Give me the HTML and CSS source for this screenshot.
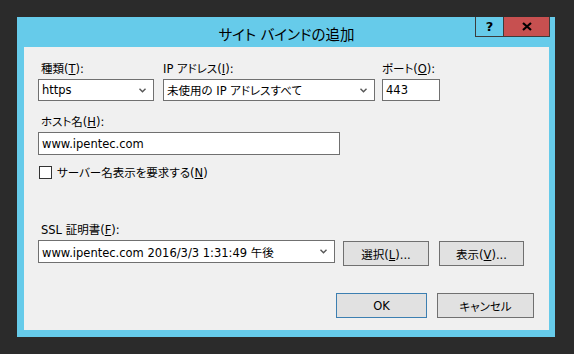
FILE: index.html
```html
<!DOCTYPE html>
<html lang="ja">
<head>
  <meta charset="UTF-8" />
  <title>サイト バインドの追加</title>
  <link rel="stylesheet" href="styles.css">
</head>
<body>
  <div class="window">
    <div class="titlebar">
      <span class="title">サイト バインドの追加</span>
      <div class="caption-buttons">
        <span class="cap-btn help">?</span>
        <span class="cap-btn close">
          <svg width="10" height="9" viewBox="0 0 10 9"><path d="M1 1 L9 8 M9 1 L1 8" stroke="#000" stroke-width="2.2" fill="none"/></svg>
        </span>
      </div>
    </div>
    <div class="client">
      <div class="row-top">
        <div class="field f-type">
          <span class="label indent">種類(<u>T</u>):</span>
          <div class="select">https
            <svg class="arrow" width="7" height="5" viewBox="0 0 7 5"><path d="M0.5 0.8 L3.5 3.8 L6.5 0.8" stroke="#555" stroke-width="1.4" fill="none"/></svg>
          </div>
        </div>
        <div class="field f-ip">
          <span class="label">IP アドレス(<u>I</u>):</span>
          <div class="select">未使用の IP アドレスすべて
            <svg class="arrow" width="7" height="5" viewBox="0 0 7 5"><path d="M0.5 0.8 L3.5 3.8 L6.5 0.8" stroke="#555" stroke-width="1.4" fill="none"/></svg>
          </div>
        </div>
        <div class="field f-port">
          <span class="label">ポート(<u>O</u>):</span>
          <div class="textbox">443</div>
        </div>
      </div>

      <div class="field f-host">
        <span class="label indent">ホスト名(<u>H</u>):</span>
        <div class="textbox tall">www.ipentec.com</div>
      </div>

      <div class="check">
        <span class="box"></span>
        <span>サーバー名表示を要求する(<u>N</u>)</span>
      </div>

      <div class="field f-ssl">
        <span class="label indent">SSL 証明書(<u>F</u>):</span>
        <div class="ssl-row">
          <div class="select tall ssl-select">www.ipentec.com 2016/3/3 1:31:49 午後
            <svg class="arrow" width="7" height="5" viewBox="0 0 7 5"><path d="M0.5 0.8 L3.5 3.8 L6.5 0.8" stroke="#555" stroke-width="1.4" fill="none"/></svg>
          </div>
          <button class="btn btn-select">選択(<u>L</u>)...</button>
          <button class="btn btn-view">表示(<u>V</u>)...</button>
        </div>
      </div>

      <div class="actions">
        <button class="btn btn-ok">OK</button>
        <button class="btn btn-cancel">キャンセル</button>
      </div>
    </div>
  </div>
</body>
</html>
```

FILE: styles.css
```css
* {
  margin: 0;
  padding: 0;
  box-sizing: border-box;
}
body {
  background-color: #2b2b2b;
  padding: 17px;
  font-family: "DejaVu Sans", "Noto Sans CJK JP", sans-serif;
  font-size: 11.5px;
  font-feature-settings: "palt";
  color: #000;
}
.window {
  width: 538px;
  height: 320px;
  background-color: #66cbea;
  padding: 0 6px 7px 7px;
  display: flex;
  flex-direction: column;
}
.titlebar {
  height: 30px;
  position: relative;
  display: flex;
  align-items: center;
  justify-content: center;
}
.title {
  font-size: 14.5px;
  padding-top: 2px;
  color: #000;
}
.caption-buttons {
  position: absolute;
  top: 0;
  right: -1px;
  display: flex;
}
.cap-btn {
  height: 20px;
  display: flex;
  align-items: center;
  justify-content: center;
  border: 1px solid #3c3c3c;
  border-top: none;
}
.help {
  width: 28px;
  font-weight: bold;
  font-size: 13px;
  border-right: none;
}
.close {
  width: 47px;
  background-color: #c75050;
}
.client {
  flex: 1;
  background-color: #f0f0f0;
  padding: 14px 0 0 14px;
  display: flex;
  flex-direction: column;
}
.label {
  display: block;
  height: 16px;
  line-height: 16px;
  margin-bottom: 2px;
  white-space: nowrap;
}
.indent {
  padding-left: 3px;
}
.row-top {
  display: flex;
}
.f-type {
  width: 116px;
  margin-right: 9px;
}
.f-ip {
  width: 212px;
  margin-right: 7px;
}
.f-port {
  width: 58px;
}
.select,
.textbox {
  height: 22px;
  background: #fff;
  border: 1px solid #707070;
  display: flex;
  align-items: center;
  padding: 0 3px;
  white-space: nowrap;
}
.select {
  justify-content: space-between;
}
.select .arrow {
  margin-right: 4px;
  flex-shrink: 0;
}
.tall {
  height: 23px;
}
.f-host {
  margin-top: 13px;
  width: 302px;
}
.check {
  display: flex;
  align-items: center;
  margin-top: 9px;
  margin-left: 1px;
  height: 16px;
  white-space: nowrap;
}
.check .box {
  width: 13px;
  height: 13px;
  border: 1px solid #333;
  background: #fff;
  margin-right: 5px;
}
.f-ssl {
  margin-top: 42px;
}
.ssl-row {
  display: flex;
  align-items: flex-start;
}
.ssl-select {
  width: 297px;
}
.btn {
  height: 25px;
  background-color: #e1e1e1;
  border: 1px solid #707070;
  font-family: inherit;
  font-size: inherit;
  font-feature-settings: inherit;
  color: #000;
}
.btn-select {
  width: 86px;
  margin: 1px 0 0 8px;
}
.btn-view {
  width: 85px;
  margin: 1px 0 0 10px;
}
.actions {
  display: flex;
  justify-content: flex-end;
  margin-top: 27px;
  padding-right: 15px;
}
.btn-ok {
  width: 91px;
  border-color: #3c7fb1;
}
.btn-cancel {
  width: 97px;
  margin-left: 10px;
}
```
